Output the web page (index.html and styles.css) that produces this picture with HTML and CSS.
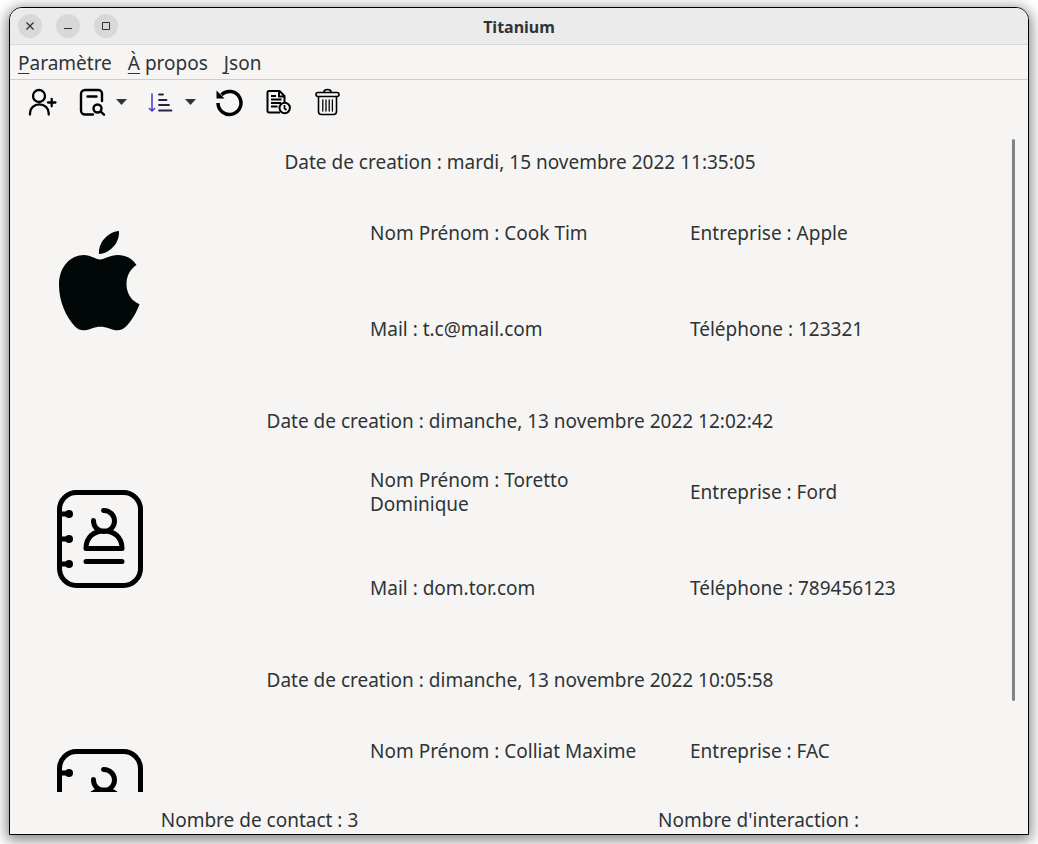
FILE: index.html
```html
<!DOCTYPE html>
<html lang="fr">
<head>
<meta charset="utf-8">
<title>Titanium</title>
<link rel="stylesheet" href="styles.css">
</head>
<body>
<svg class="defs" aria-hidden="true">
  <symbol id="contact-book" viewBox="0 0 100 100">
    <g fill="none" stroke="#000" stroke-width="5" stroke-linecap="round">
      <rect x="9.500" y="2.500" width="81" height="93" rx="17"/>
      <path d="M11 24h8M11 49h8M11 74h8"/>
      <path d="M53.500 20.500a10.500 10.500 0 1 1-10 10M36 58.500C36 47 44 41 54 41s18 6 18 17.500zM36 71.500h36" stroke-linejoin="round"/>
    </g>
    <g><circle cx="19" cy="24" r="4"/><circle cx="19" cy="49" r="4"/><circle cx="19" cy="74" r="4"/></g>
  </symbol>
</svg>
<div class="window">
  <header class="titlebar">
    <div class="controls">
      <button class="control" aria-label="Fermer"><svg viewBox="0 0 24 24"><path d="M8.500 8.500l7 7M15.500 8.500l-7 7" stroke-width="1.300"/></svg></button>
      <button class="control" aria-label="Réduire"><svg viewBox="0 0 24 24"><path d="M8 14.500h8"/></svg></button>
      <button class="control" aria-label="Agrandir"><svg viewBox="0 0 24 24"><path d="M8.500 8.500h7v7h-7z"/></svg></button>
    </div>
    <h1 class="title">Titanium</h1>
  </header>
  <nav class="menubar">
    <button class="menu"><span class="key">P</span>aramètre</button>
    <button class="menu"><span class="key">À</span> propos</button>
    <button class="menu"><span class="key">J</span>son</button>
  </nav>
  <div class="toolbar">
    <button class="tool" aria-label="Ajouter un contact">
      <svg viewBox="0 0 32 32"><g fill="none" stroke="#000" stroke-width="2.300" stroke-linecap="round"><circle cx="13" cy="10" r="6"/><path d="M4 28.500v-1.500a9.300 8.500 0 0 1 18.700 0v1.500M22 16.500h7.500M25.700 12.800v7.500"/></g></svg>
    </button>
    <div class="split">
      <button class="tool" aria-label="Rechercher">
        <svg viewBox="0 0 32 32"><g fill="none" stroke="#000" stroke-width="2.400" stroke-linecap="round"><path d="M18 28.500h-8a4 4 0 0 1-4-4V8a4 4 0 0 1 4-4h13.500a3.500 3.500 0 0 1 3.500 3.500V15M12.500 10.500h9"/><circle cx="22.500" cy="22.500" r="4"/><path d="M25.700 25.700l3.300 3"/></g></svg>
      </button>
      <button class="arrow" aria-label="Options de recherche"></button>
    </div>
    <div class="split">
      <button class="tool" aria-label="Trier">
        <svg viewBox="0 0 32 32"><g fill="none" stroke-linecap="round"><path d="M8 8v16.500M5.300 22.500l2.700 2.500 2.700-2.500" stroke="#4c45c8" stroke-width="1.600"/><path d="M15 8.500h4M15 14h7.500M15 19h10M15 24.500h12.500" stroke="#242447" stroke-width="1.800"/></g></svg>
      </button>
      <button class="arrow" aria-label="Options de tri"></button>
    </div>
    <button class="tool" aria-label="Actualiser">
      <svg viewBox="0 0 32 32"><path d="M5 17a11.500 11.500 0 1 0 3.500-8.300" fill="none" stroke="#000" stroke-width="3.500"/><path d="M3.500 4.500v8h8z"/></svg>
    </button>
    <button class="tool" aria-label="Historique">
      <svg viewBox="0 0 32 32"><g fill="none" stroke="#000" stroke-width="2" stroke-linejoin="round"><path d="M18 26.500H7a1.500 1.500 0 0 1-1.500-1.500V6.500A1.500 1.500 0 0 1 7 5h10.500l5 5v6.500M17 5v5.500h5.500M9 10h5M9 13.500h10.500M9 17h10M9 20.500h6.500"/><circle cx="22.700" cy="22" r="5.200"/><path d="M22.500 19v3.500l2 1.500" stroke-width="1.700"/></g></svg>
    </button>
    <button class="tool" aria-label="Supprimer">
      <svg viewBox="0 0 32 32"><g fill="none" stroke="#000" stroke-width="1.600" stroke-linecap="round"><rect x="5" y="6.500" width="23" height="4" rx="2"/><path d="M13 6a3.500 2.500 0 0 1 7 0M7.500 11V25.500a3 3 0 0 0 3 3h12a3 3 0 0 0 3-3V11"/><path d="M11.800 14v11M15 14v11M18.200 14v11M21.400 14v11" stroke-width="1.300"/></g></svg>
    </button>
  </div>
  <main class="main">
    <div class="list">
      <article class="card">
        <p class="date">Date de creation : mardi, 15 novembre 2022 11:35:05</p>
        <svg class="photo" viewBox="0 0 100 100" role="img" aria-label="Apple"><g fill="#020708"><path d="M69 0c.8 10.500-7.500 22-20 23C48 12.500 57 1 69 0z"/><path d="M86.500 34c-6 4-10 10.500-10 19 0 9.500 5 17 13 20.200-3.500 9.500-8.500 17.300-13.500 22.300-5.500 5.500-11.500 4-16.500 2-6.500-2.500-11.500-2.500-18 0-5 2-11.500 3.500-16.500-2C16.500 86.500 9 71 9 54c0-19 12-30 25-30 7 0 11.500 4.500 16 4.500S59.500 24 68 24c7.500 0 14.500 3.500 18.500 10z"/></g></svg>
        <p class="field">Nom Prénom : Cook Tim</p>
        <p class="field">Entreprise : Apple</p>
        <p class="field">Mail : t.c@mail.com</p>
        <p class="field">Téléphone : 123321</p>
      </article>
      <article class="card">
        <p class="date">Date de creation : dimanche, 13 novembre 2022 12:02:42</p>
        <svg class="photo" role="img" aria-label="Contact"><use href="#contact-book"/></svg>
        <p class="field">Nom Prénom : Toretto Dominique</p>
        <p class="field">Entreprise : Ford</p>
        <p class="field">Mail : dom.tor.com</p>
        <p class="field">Téléphone : 789456123</p>
      </article>
      <article class="card">
        <p class="date">Date de creation : dimanche, 13 novembre 2022 10:05:58</p>
        <svg class="photo" role="img" aria-label="Contact"><use href="#contact-book"/></svg>
        <p class="field">Nom Prénom : Colliat Maxime</p>
        <p class="field">Entreprise : FAC</p>
      </article>
    </div>
    <div class="scrollbar"></div>
  </main>
  <footer class="status">
    <p>Nombre de contact : 3</p>
    <p>Nombre d'interaction :</p>
  </footer>
</div>
</body>
</html>
```
FILE: styles.css
```css
* {
  box-sizing: border-box;
}

body {
  margin: 0;
  height: 100vh;
  padding: 7px 9px 9px;
  background: #fff;
  color: #2e3436;
  font: 19px/24px "Noto Sans", sans-serif;
  overflow: hidden;
}

p,
h1 {
  margin: 0;
}

button {
  border: 0;
  padding: 0;
  background: none;
  color: inherit;
  font: inherit;
}

.defs {
  position: absolute;
  width: 0;
  height: 0;
}

.window {
  display: flex;
  flex-direction: column;
  height: 100%;
  border: 1px solid #000;
  border-radius: 13px 13px 0 0;
  background: #f6f5f4;
  box-shadow: 0 3px 14px 2px rgba(0, 0, 0, 0.5);
  overflow: hidden;
}

.titlebar {
  display: grid;
  grid-template-columns: 1fr auto 1fr;
  align-items: center;
  height: 37px;
  padding: 0 8px;
  border-bottom: 1px solid #d8d8d8;
  background: #ebebeb;
}

.controls {
  display: flex;
  gap: 14px;
}

.control {
  width: 24px;
  height: 24px;
  border-radius: 50%;
  background: #d8d8d8;
}

.control svg {
  display: block;
  fill: none;
  stroke: #2e3436;
}

.title {
  padding-top: 2px;
  font-size: 16px;
  line-height: 24px;
}

.menubar {
  display: flex;
  gap: 16px;
  height: 35px;
  padding: 2px 8px 0;
  border-bottom: 1px solid #cfcdca;
}

.key {
  text-decoration: underline;
  text-decoration-thickness: 1px;
  text-underline-offset: 3px;
  text-decoration-skip-ink: none;
}

.toolbar {
  display: flex;
  gap: 17px;
  padding: 6px 16px;
}

.split {
  display: flex;
  gap: 4px;
}

.tool svg {
  display: block;
  width: 32px;
  height: 32px;
}

.arrow {
  width: 16px;
  padding-left: 5px;
}

.arrow::before {
  content: "";
  display: block;
  width: 11px;
  height: 6px;
  background: #2e3436;
  clip-path: polygon(0 0, 100% 0, 50% 100%);
}

.main {
  position: relative;
  flex: 1;
  min-height: 0;
  margin-top: 15px;
}

.list {
  height: 100%;
  padding: 0 38px 0 40px;
  overflow-y: auto;
  scrollbar-width: none;
}

.scrollbar {
  position: absolute;
  top: 0;
  right: 13px;
  width: 3px;
  height: 86%;
  border-radius: 2px;
  background: #7f8584;
}

.card {
  display: grid;
  grid-template-columns: repeat(3, 1fr);
  grid-template-rows: 46px 96px 96px;
  column-gap: 20px;
  align-items: center;
  padding-bottom: 21px;
}

.date {
  grid-column: 1 / -1;
  text-align: center;
}

.photo {
  grid-row: 2 / 4;
  width: 100px;
  height: 100px;
}

.field {
  padding-right: 10px;
}

.status {
  display: grid;
  grid-template-columns: 1fr 1fr;
  padding: 16px 20px 2px 0;
  text-align: center;
}
```
